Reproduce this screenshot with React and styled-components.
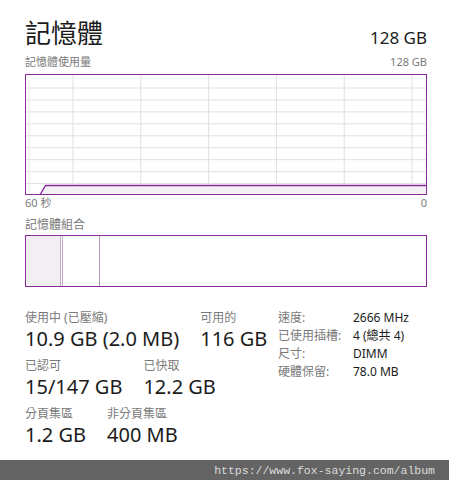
import React from 'react';
import styled, { createGlobalStyle } from 'styled-components';

const GlobalStyle = createGlobalStyle`
  html, body {
    margin: 0;
    padding: 0;
    background: #fff;
  }
  body {
    font-family: "Noto Sans", "Noto Sans CJK TC", sans-serif;
    color: #1b1b1b;
  }
`;

const PURPLE = '#8b2a9b';

const Page = styled.div`
  width: 449px;
  height: 480px;
  display: flex;
  flex-direction: column;
  overflow: hidden;
`;

const Content = styled.div`
  padding: 15px 22px 0 25px;
`;

const Header = styled.div`
  display: flex;
  justify-content: space-between;
  align-items: flex-end;
  margin-bottom: 4px;
`;

const Title = styled.h1`
  margin: 0;
  font-size: 26px;
  font-weight: 400;
  line-height: 36px;
`;

const Total = styled.div`
  font-size: 17px;
  line-height: 24px;
  padding-bottom: 1px;
`;

const Caption = styled.div`
  display: flex;
  justify-content: space-between;
  font-size: ${(p) => p.size || 11}px;
  color: #7a7a7a;
  line-height: ${(p) => (p.size ? 16 : 14)}px;
  margin-top: ${(p) => p.top || 0}px;
  margin-bottom: ${(p) => p.bottom || 0}px;
`;

const Graph = styled.div`
  border: 1px solid ${PURPLE};
  height: 119px;
  svg { display: block; }
`;

const Composition = styled.div`
  border: 1px solid ${PURPLE};
  height: 50px;
  display: flex;
`;

const Segment = styled.div`
  width: ${(p) => p.w}px;
  flex: ${(p) => (p.w ? 'none' : '1')};
  background: ${(p) => p.fill || '#fff'};
  border-right: ${(p) => (p.line ? `1px solid ${p.line}` : 'none')};
`;

const Stats = styled.div`
  display: flex;
  align-items: flex-start;
  margin-top: 22px;
`;

const Left = styled.div`
  width: 253px;
  display: flex;
  flex-direction: column;
  gap: 5px;
`;

const StatRow = styled.div`
  display: flex;
  gap: 21px;
`;

const Stat = styled.div`
  display: flex;
  flex-direction: column;
`;

const Label = styled.div`
  font-size: 12px;
  line-height: 17px;
  color: #7a7a7a;
`;

const Value = styled.div`
  font-size: 20px;
  line-height: 26px;
  color: #1b1b1b;
  white-space: nowrap;
`;

const Specs = styled.div`
  display: grid;
  grid-template-columns: 75px auto;
  font-size: 12px;
  line-height: 18px;
`;

const SpecKey = styled.div`
  color: #7a7a7a;
`;

const SpecVal = styled.div`
  color: #1b1b1b;
`;

const Footer = styled.div`
  margin-top: auto;
  height: 20px;
  background: #646464;
  display: flex;
  align-items: center;
  justify-content: flex-end;
  padding-right: 14px;
  font-family: "Liberation Mono", monospace;
  font-size: 11.5px;
  color: #dcdcdc;
`;

function UsageChart() {
  const w = 400;
  const h = 119;
  const rows = Array.from({ length: 9 }, (_, i) => 13 + i * 11.95);
  const cols = Array.from({ length: 6 }, (_, i) => 47 + i * 67.8);
  const top = 110.5;
  return (
    <svg width={w} height={h} viewBox={`0 0 ${w} ${h}`}>
      {rows.map((y) => (
        <line key={y} x1="0" x2={w} y1={y} y2={y} stroke="#e4dce6" strokeWidth="1" />
      ))}
      {cols.map((x) => (
        <line key={x} x1={x} x2={x} y1="0" y2={h} stroke="#e4dce6" strokeWidth="1" />
      ))}
      <polygon points={`14.5,${h} 19.5,${top} ${w},${top} ${w},${h}`} fill="#f4f1f4" />
      <polyline points={`14.5,${h} 19.5,${top} ${w},${top}`} fill="none" stroke={PURPLE} strokeWidth="1.4" />
    </svg>
  );
}

export default function App() {
  return (
    <Page>
      <GlobalStyle />
      <Content>
        <Header>
          <Title>記憶體</Title>
          <Total>128 GB</Total>
        </Header>
        <Caption bottom={5}>
          <span>記憶體使用量</span>
          <span>128 GB</span>
        </Caption>
        <Graph>
          <UsageChart />
        </Graph>
        <Caption top={1}>
          <span>60 秒</span>
          <span>0</span>
        </Caption>
        <Caption size={12} top={7} bottom={2}>
          <span>記憶體組合</span>
        </Caption>
        <Composition>
          <Segment w={34} fill="#f1eff1" line="#c9a9d0" />
          <Segment w={1} line="#c9a9d0" />
          <Segment w={36} line="#b59bbb" />
          <Segment />
        </Composition>
        <Stats>
          <Left>
            <StatRow>
              <Stat>
                <Label>使用中 (已壓縮)</Label>
                <Value>10.9 GB (2.0 MB)</Value>
              </Stat>
              <Stat>
                <Label>可用的</Label>
                <Value>116 GB</Value>
              </Stat>
            </StatRow>
            <StatRow>
              <Stat>
                <Label>已認可</Label>
                <Value>15/147 GB</Value>
              </Stat>
              <Stat>
                <Label>已快取</Label>
                <Value>12.2 GB</Value>
              </Stat>
            </StatRow>
            <StatRow>
              <Stat>
                <Label>分頁集區</Label>
                <Value>1.2 GB</Value>
              </Stat>
              <Stat>
                <Label>非分頁集區</Label>
                <Value>400 MB</Value>
              </Stat>
            </StatRow>
          </Left>
          <Specs>
            <SpecKey>速度:</SpecKey>
            <SpecVal>2666 MHz</SpecVal>
            <SpecKey>已使用插槽:</SpecKey>
            <SpecVal>4 (總共 4)</SpecVal>
            <SpecKey>尺寸:</SpecKey>
            <SpecVal>DIMM</SpecVal>
            <SpecKey>硬體保留:</SpecKey>
            <SpecVal>78.0 MB</SpecVal>
          </Specs>
        </Stats>
      </Content>
      <Footer>https://www.fox-saying.com/album</Footer>
    </Page>
  );
}
